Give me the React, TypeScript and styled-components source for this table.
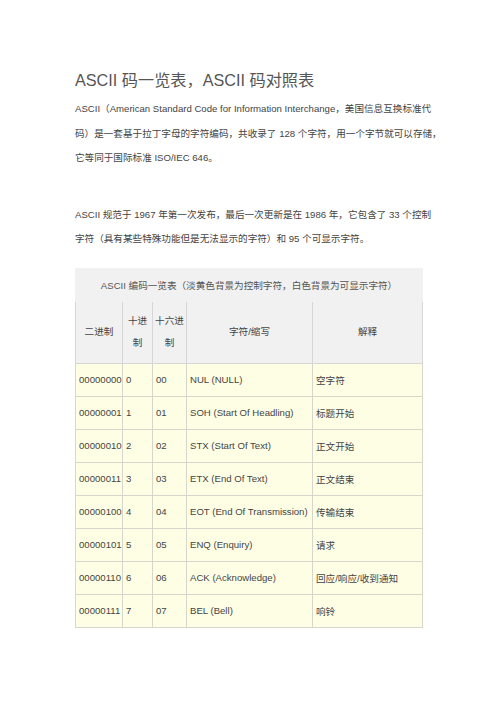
import React from "react";
import styled, { createGlobalStyle } from "styled-components";

const Global = createGlobalStyle`
  html, body { margin: 0; padding: 0; background: #ffffff; }
  body { font-family: "Liberation Sans", "Noto Sans CJK SC", sans-serif; color: #555; }
`;

const Page = styled.div`
  width: 496px;
  min-height: 702px;
  padding: 67px 74px 0 75px;
  box-sizing: border-box;
`;

const Title = styled.h1`
  margin: 0;
  font-size: 16.2px;
  font-weight: 400;
  line-height: 26px;
  color: #555;
`;

const Para = styled.p<{ $top: number }>`
  margin: ${(p) => p.$top}px 0 0 0;
  font-size: 9.6px;
  line-height: 24.5px;
  color: #444;
`;

const Line = styled.span<{ $full?: boolean }>`
  display: block;
  white-space: nowrap;
  text-align: left;
  text-align-last: ${(p) => (p.$full ? "justify" : "left")};
  width: 344px;
`;

const Table = styled.table`
  margin-top: 16px;
  width: 347px;
  table-layout: fixed;
  border-collapse: collapse;
  font-size: 9.6px;
  color: #444;
`;

const Col = styled.col<{ $w: number }>`
  width: ${(p) => p.$w}px;
`;

const Caption = styled.td`
  height: 33px;
  background: #f1f1f1;
  text-align: center;
  padding: 0;
  border: 1px solid #f1f1f1;
  border-bottom: none;
  color: #555;
`;

const Th = styled.th`
  height: 61px;
  background: #f1f1f1;
  font-weight: 400;
  border: 1px solid #d6d6d6;
  border-top: none;
  padding: 0;
  line-height: 22px;
  color: #444;
  text-align: center;
  white-space: nowrap;
`;

const Td = styled.td`
  height: 32px;
  background: #fefee4;
  border: 1px solid #d6d6cc;
  padding: 0 0 0 3px;
  white-space: nowrap;
  overflow: hidden;
`;

const rows = [
  ["00000000", "0", "00", "NUL (NULL)", "空字符"],
  ["00000001", "1", "01", "SOH (Start Of Headling)", "标题开始"],
  ["00000010", "2", "02", "STX (Start Of Text)", "正文开始"],
  ["00000011", "3", "03", "ETX (End Of Text)", "正文结束"],
  ["00000100", "4", "04", "EOT (End Of Transmission)", "传输结束"],
  ["00000101", "5", "05", "ENQ (Enquiry)", "请求"],
  ["00000110", "6", "06", "ACK (Acknowledge)", "回应/响应/收到通知"],
  ["00000111", "7", "07", "BEL (Bell)", "响铃"],
];

export default function App() {
  return (
    <Page>
      <Global />
      <Title>ASCII 码一览表，ASCII 码对照表</Title>
      <Para $top={4}>
        <Line $full>ASCII（American Standard Code for Information Interchange，美国信息互换标准代</Line>
        <Line $full>码）是一套基于拉丁字母的字符编码，共收录了 128 个字符，用一个字节就可以存储，</Line>
        <Line>它等同于国际标准 ISO/IEC 646。</Line>
      </Para>
      <Para $top={32}>
        <Line $full>ASCII 规范于 1967 年第一次发布，最后一次更新是在 1986 年，它包含了 33 个控制</Line>
        <Line>字符（具有某些特殊功能但是无法显示的字符）和 95 个可显示字符。</Line>
      </Para>
      <Table>
        <colgroup>
          <Col $w={47} />
          <Col $w={30} />
          <Col $w={34} />
          <Col $w={126} />
          <Col $w={110} />
        </colgroup>
        <tbody>
          <tr>
            <Caption colSpan={5}>ASCII 编码一览表（淡黄色背景为控制字符，白色背景为可显示字符）</Caption>
          </tr>
          <tr>
            <Th>二进制</Th>
            <Th>十进<br />制</Th>
            <Th>十六进<br />制</Th>
            <Th>字符/缩写</Th>
            <Th>解释</Th>
          </tr>
          {rows.map((r) => (
            <tr key={r[0]}>
              {r.map((c, i) => (
                <Td key={i}>{c}</Td>
              ))}
            </tr>
          ))}
        </tbody>
      </Table>
    </Page>
  );
}
